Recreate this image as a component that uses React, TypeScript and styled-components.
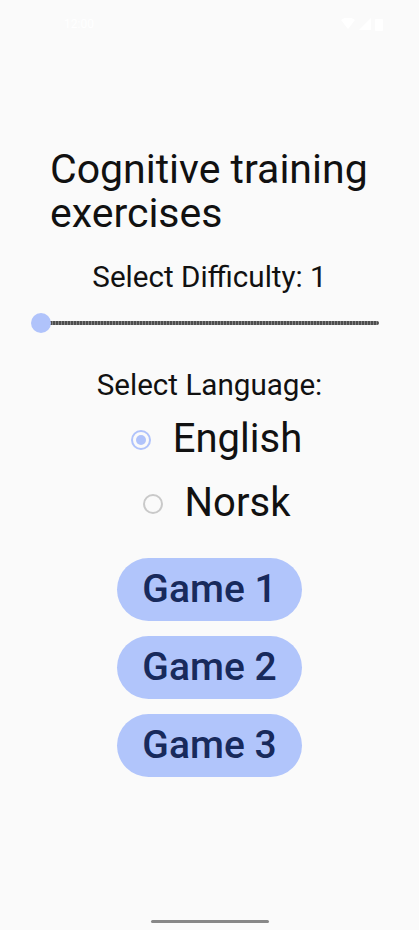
import React, { useState } from "react";
import styled, { createGlobalStyle } from "styled-components";

const GlobalStyle = createGlobalStyle`
  html, body {
    margin: 0;
    padding: 0;
    background: #fafafa;
  }
  body {
    font-family: Roboto, "Noto Sans", "Liberation Sans", sans-serif;
  }
`;

const Screen = styled.div`
  width: 419px;
  height: 930px;
  display: flex;
  flex-direction: column;
  align-items: center;
  background: #fafafa;
  overflow: hidden;
`;

const StatusBar = styled.div`
  width: 100%;
  height: 48px;
  display: flex;
  align-items: center;
  justify-content: space-between;
  padding: 0 36px 0 64px;
  box-sizing: border-box;
  color: #ffffff;
  font-size: 12px;
`;

const StatusIcons = styled.div`
  display: flex;
  gap: 4px;
  align-items: center;
`;

const Title = styled.h1`
  align-self: stretch;
  margin: 99px 0 0;
  padding: 0 40px 0 50px;
  font-size: 41px;
  line-height: 44px;
  font-weight: 400;
  color: #111;
`;

const Label = styled.div<{ $top: number }>`
  margin-top: ${(p) => p.$top}px;
  font-size: 29.6px;
  line-height: 34px;
  color: #111;
`;

const SliderRow = styled.div`
  align-self: stretch;
  margin: 9px 30px 0;
  height: 40px;
  position: relative;
  display: flex;
  align-items: center;
  padding: 0 10px 0 11px;
`;

const Track = styled.div`
  flex: 1;
  height: 4px;
  border-radius: 2px;
  background: repeating-linear-gradient(90deg, #4e4e4e 0 2px, #858585 2px 3px);
`;

const Thumb = styled.div`
  position: absolute;
  left: 1px;
  top: 10px;
  width: 20px;
  height: 20px;
  border-radius: 50%;
  background: #b0c3fb;
`;

const RadioGroup = styled.div`
  margin-top: 5px;
  display: flex;
  flex-direction: column;
  align-items: center;
`;

const RadioRow = styled.label`
  display: flex;
  align-items: center;
  height: 64px;
  gap: 8px;
  cursor: pointer;
`;

const RadioBox = styled.span`
  width: 48px;
  height: 48px;
  display: flex;
  align-items: center;
  justify-content: center;
  margin-top: 2px;
`;

const RadioCircle = styled.span<{ $on: boolean }>`
  width: 20px;
  height: 20px;
  box-sizing: border-box;
  border-radius: 50%;
  border: 2px solid ${(p) => (p.$on ? "#b0c3fb" : "#c9c9c9")};
  display: flex;
  align-items: center;
  justify-content: center;
  &::after {
    content: "";
    width: 10px;
    height: 10px;
    border-radius: 50%;
    background: ${(p) => (p.$on ? "#b0c3fb" : "transparent")};
  }
`;

const RadioText = styled.span`
  font-size: 40px;
  line-height: 64px;
  color: #111;
`;

const Buttons = styled.div`
  margin-top: 23px;
  display: flex;
  flex-direction: column;
  align-items: center;
  gap: 15.5px;
`;

const GameButton = styled.button`
  height: 62.5px;
  width: 185.5px;
  border: none;
  border-radius: 32px;
  background: #b1c5fb;
  color: #182a5c;
  font-family: Roboto, "Noto Sans", sans-serif;
  font-size: 39px;
  font-weight: 500;
  padding: 0;
  cursor: pointer;
`;

const HomeBar = styled.div`
  margin-top: auto;
  margin-bottom: 7px;
  width: 118px;
  height: 3px;
  border-radius: 2px;
  background: #888888;
`;

const languages = ["English", "Norsk"];

export default function App() {
  const [lang, setLang] = useState("English");

  return (
    <>
      <GlobalStyle />
      <Screen>
        <StatusBar>
          <span>12:00</span>
          <StatusIcons>
            <svg width="14" height="12" viewBox="0 0 14 12">
              <path d="M7 11 L0 2 Q7 -3 14 2 Z" fill="#fff" />
            </svg>
            <svg width="12" height="12" viewBox="0 0 12 12">
              <path d="M12 0 V12 H0 Z" fill="#fff" />
            </svg>
            <svg width="8" height="13" viewBox="0 0 8 13">
              <rect x="0" y="1" width="8" height="12" rx="1" fill="#fff" />
            </svg>
          </StatusIcons>
        </StatusBar>
        <Title>Cognitive training exercises</Title>
        <Label $top={25}>Select Difficulty: 1</Label>
        <SliderRow>
          <Track />
          <Thumb />
        </SliderRow>
        <Label $top={25}>Select Language:</Label>
        <RadioGroup>
          {languages.map((l) => (
            <RadioRow key={l} onClick={() => setLang(l)}>
              <RadioBox>
                <RadioCircle $on={lang === l} />
              </RadioBox>
              <RadioText>{l}</RadioText>
            </RadioRow>
          ))}
        </RadioGroup>
        <Buttons>
          <GameButton>Game 1</GameButton>
          <GameButton>Game 2</GameButton>
          <GameButton>Game 3</GameButton>
        </Buttons>
        <HomeBar />
      </Screen>
    </>
  );
}
